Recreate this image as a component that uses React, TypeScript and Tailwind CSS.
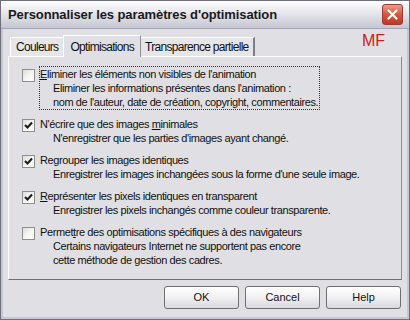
import React from "react";

const font = { fontFamily: "Tahoma, 'Liberation Sans', Arial, sans-serif" };

type Item = {
  label: React.ReactNode;
  lines: string[];
  checked: boolean;
  focused?: boolean;
};

const u = (s: string) => <span className="underline underline-offset-1">{s}</span>;

const items: Item[] = [
  {
    label: <>{u("E")}liminer les éléments non visibles de l'animation</>,
    lines: [
      "Eliminer les informations présentes dans l'animation  :",
      "nom de l'auteur, date de création, copyright, commentaires.",
    ],
    checked: false,
    focused: true,
  },
  {
    label: <>N'écrire que des images {u("m")}inimales</>,
    lines: ["N'enregistrer que les parties d'images ayant changé."],
    checked: true,
  },
  {
    label: <>Re{u("g")}rouper les images identiques</>,
    lines: ["Enregistrer les images inchangées sous la forme d'une seule image."],
    checked: true,
  },
  {
    label: <>{u("R")}eprésenter les pixels identiques en transparent</>,
    lines: ["Enregistrer les pixels inchangés comme couleur transparente."],
    checked: true,
  },
  {
    label: <>Permet{u("t")}re des optimisations spécifiques à des navigateurs</>,
    lines: ["Certains navigateurs Internet ne supportent pas encore", "cette méthode de gestion des cadres."],
    checked: false,
  },
];

function CheckBox({ checked }: { checked: boolean }) {
  return (
    <div className="w-[13px] h-[13px] border border-[#8e8f8f] bg-gradient-to-br from-[#dcdcd7] via-[#f5f5f3] to-white flex items-center justify-center shrink-0">
      {checked && (
        <svg width="9" height="9" viewBox="0 0 9 9">
          <path d="M1 4 L3.5 6.5 L8 1.5" stroke="#1a1a1a" strokeWidth="2" fill="none" />
        </svg>
      )}
    </div>
  );
}

function Button({ children }: { children: React.ReactNode }) {
  return (
    <div className="w-[75px] h-[23px] rounded-[3px] border border-[#6f6f72] bg-gradient-to-b from-white via-[#f1f1f3] to-[#d8d8de] flex items-center justify-center text-[11px] text-[#111]">
      {children}
    </div>
  );
}

export default function App() {
  return (
    <div className="w-[410px] h-[320px] bg-[#e0dfe3] border border-[#6e6e7c] flex flex-col overflow-hidden" style={font}>
      {/* Title bar */}
      <div className="h-[28px] shrink-0 flex items-center justify-between pl-[7px] pr-[6px] bg-gradient-to-b from-[#fefefe] via-[#e3e3ea] to-[#c6c6d2] border-b border-[#a5a5b5]">
        <span className="text-[13px] text-[#1a1a1a] font-bold tracking-[-0.1px]" style={{ fontFamily: "'Liberation Sans', Arial, sans-serif" }}>
          Personnaliser les paramètres d'optimisation
        </span>
        <div className="w-[21px] h-[21px] rounded-[3px] border border-[#9b3b35] bg-gradient-to-b from-[#e99c8c] via-[#d5573f] to-[#b93a28] flex items-center justify-center">
          <svg width="11" height="11" viewBox="0 0 11 11">
            <path d="M1.5 1.5 L9.5 9.5 M9.5 1.5 L1.5 9.5" stroke="white" strokeWidth="2.2" strokeLinecap="round" />
          </svg>
        </div>
      </div>

      {/* Client */}
      <div className="flex-1 flex flex-col px-[5px] border-x-[2px] border-b-[2px] border-[#c6c6d0]">
        {/* Tabs */}
        <div className="flex items-end justify-between mt-[5px] h-[22px]">
          <div className="flex items-end pl-[2px]">
            <div className="h-[19px] px-[5px] flex items-center border-t border-l border-[#fff] bg-[#e6e5e9] text-[12px] text-[#111] tracking-[-0.7px]">
              Couleurs
            </div>
            <div className="h-[22px] px-[6px] flex items-start pt-[2px] border-t border-x border-white border-r-[#8f8f95] bg-[#e0dfe3] text-[12px] text-[#111] tracking-[-0.7px] -mb-px relative z-10">
              Optimisations
            </div>
            <div className="h-[19px] px-[4px] flex items-center border-t border-r-2 border-white border-r-[#7d7d84] bg-[#e6e5e9] text-[12px] text-[#111] tracking-[-0.7px]">
              Transparence partielle
            </div>
          </div>
          <span className="text-[16px] text-[#d0201c] mr-[17px] mb-[3px]" style={{ fontFamily: "'Liberation Sans', Arial, sans-serif" }}>
            MF
          </span>
        </div>

        {/* Panel */}
        <div className="h-[224px] border border-t-white border-l-white border-r-[#8a8a90] border-b-[#6f6f75] bg-[#e0dfe3] pt-[10px] pl-[13px] flex flex-col gap-[8px]">
          {items.map((it, i) => (
            <div key={i} className="flex items-start gap-[5px]">
              <div className="pt-[2px]">
                <CheckBox checked={it.checked} />
              </div>
              <div
                className={`text-[11px] leading-[14px] text-[#111] tracking-[-0.4px] ${
                  it.focused ? "outline-1 outline-dotted outline-[#333] pr-[1px]" : ""
                }`}
              >
                <div>{it.label}</div>
                {it.lines.map((l, j) => (
                  <div key={j} className="pl-[13px]">
                    {l}
                  </div>
                ))}
              </div>
            </div>
          ))}
        </div>

        {/* Buttons */}
        <div className="flex justify-end gap-[6px] mt-[6px] pr-[1px]">
          <Button>OK</Button>
          <Button>Cancel</Button>
          <Button>Help</Button>
        </div>
      </div>
    </div>
  );
}
